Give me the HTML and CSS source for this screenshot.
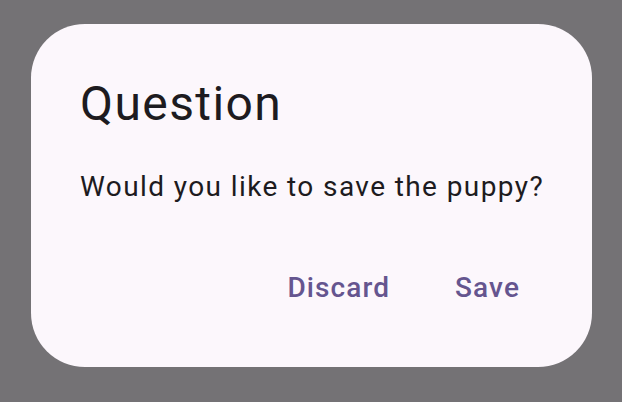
FILE: index.html
```html
<!DOCTYPE html>
<html>
<head>
<meta charset="utf-8">
<link rel="stylesheet" href="styles.css">
</head>
<body>
<div class="scrim">
  <div class="dialog">
    <h1 class="title">Question</h1>
    <p class="body">Would you like to save the puppy?</p>
    <div class="actions">
      <button class="btn">Discard</button>
      <button class="btn">Save</button>
    </div>
  </div>
</div>
</body>
</html>
```
FILE: styles.css
```css
html, body {
  margin: 0;
  padding: 0;
  width: 622px;
  height: 402px;
  background: #747275;
  font-family: Roboto, "Noto Sans", sans-serif;
  overflow: hidden;
}
.scrim {
  padding: 24px 30px 35px 31px;
  box-sizing: border-box;
  width: 622px;
  height: 402px;
}
.dialog {
  background: #fcf7fc;
  border-radius: 54px;
  height: 343px;
  box-sizing: border-box;
  padding: 48px 48px 0 49px;
  display: flex;
  flex-direction: column;
}
.title {
  margin: 0;
  font-size: 48px;
  font-weight: 400;
  line-height: 64px;
  color: #1d1b20;
  letter-spacing: 1.4px;
}
.body {
  margin: 31px 0 0;
  font-size: 28px;
  line-height: 40px;
  color: #1d1b20;
  letter-spacing: 1.4px;
  white-space: nowrap;
}
.actions {
  margin-top: 40px;
  display: flex;
  justify-content: flex-end;
  gap: 17px;
  margin-right: 0;
}
.btn {
  font-family: inherit;
  background: none;
  border: 0;
  padding: 0 24px;
  height: 80px;
  font-size: 28px;
  font-weight: 500;
  color: #65558f;
  letter-spacing: 1.1px;
}
```
